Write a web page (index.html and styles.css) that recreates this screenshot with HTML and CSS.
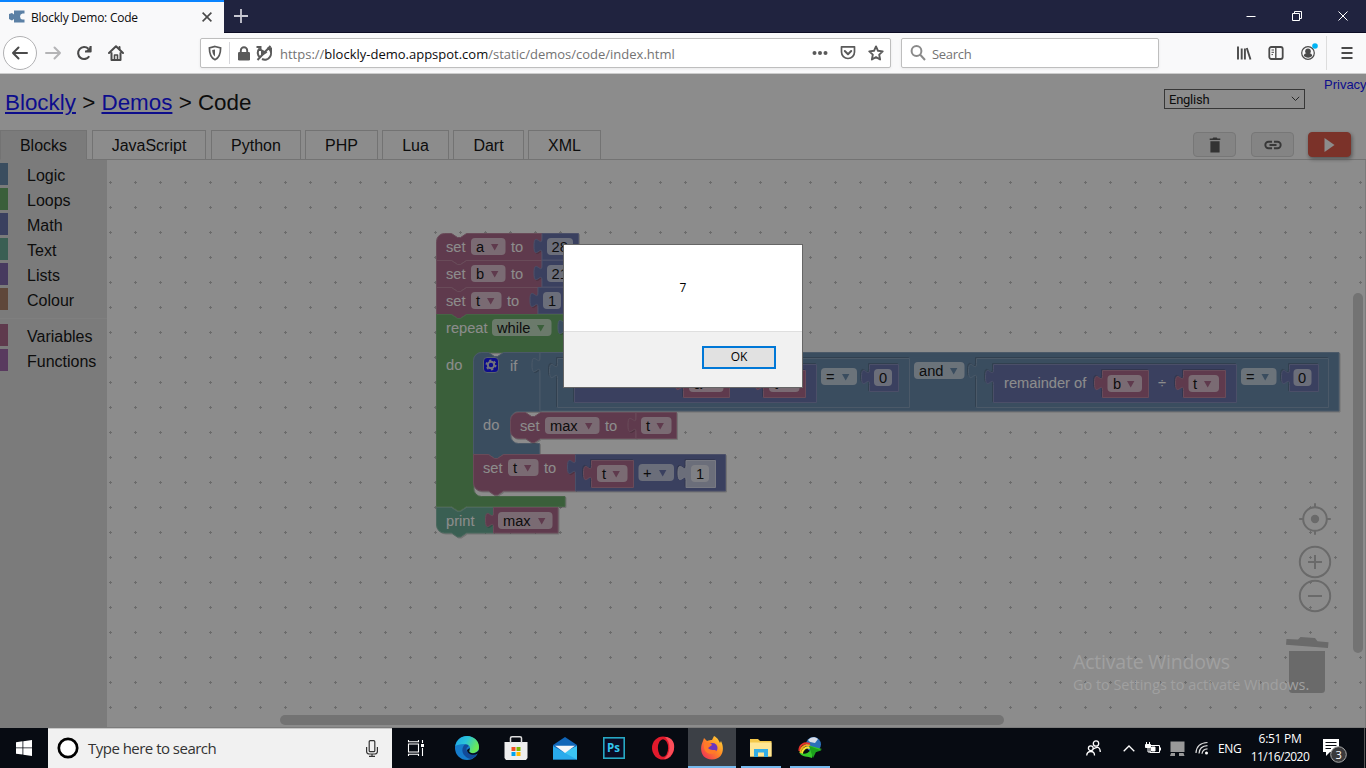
FILE: index.html
```html
<!DOCTYPE html>
<html lang="en">
<head>
<meta charset="utf-8">
<title>Blockly Demo: Code</title>
<link rel="stylesheet" href="styles.css">
</head>
<body>
<div class="screen">
  <header class="titlebar">
    <div class="tab-current">
      <svg class="favicon" width="16" height="16" viewBox="0 0 16 16"><path d="M5 1.500H15.500V4.500H13.500Q11 5 11 7.500T13.500 10.500H15.500V13.500H5V10L3 11.500L0 10V5L3 4L5 5.500Z" fill="#5b80a5"/></svg>
      <span class="tab-title">Blockly Demo: Code</span>
      <svg width="10" height="10" viewBox="0 0 10 10" stroke="#4a4a4a" stroke-width="1.6"><path d="M.6.6 9.4 9.4M9.4.6.6 9.4"/></svg>
    </div>
    <svg class="new-tab" width="14" height="14" viewBox="0 0 14 14" stroke="#c8c8d2" stroke-width="1.8"><path d="M7 0V14M0 7H14"/></svg>
    <div class="window-buttons">
      <svg width="10" height="10" viewBox="0 0 10 10" stroke="#fff"><path d="M.5 5.500H9.500"/></svg>
      <svg width="10" height="10" viewBox="0 0 10 10" stroke="#fff" fill="none"><path d="M.5 2.500H7.500V9.500H.5ZM2.500 2.500V.5H9.500V7.500H7.500"/></svg>
      <svg width="10" height="10" viewBox="0 0 10 10" stroke="#fff"><path d="M.5.5 9.500 9.500M9.500.5.5 9.500"/></svg>
    </div>
  </header>

  <nav class="navbar">
    <div class="nav-left">
      <span class="back"><svg width="18" height="16" viewBox="0 0 18 16" fill="none" stroke="#4a4a4a" stroke-width="2" stroke-linecap="round" stroke-linejoin="round"><path d="M16 8H2M7.500 2.500 2 8l5.500 5.500"/></svg></span>
      <svg width="18" height="16" viewBox="0 0 18 16" fill="none" stroke="#b4b4b6" stroke-width="2" stroke-linecap="round" stroke-linejoin="round"><path d="M2 8H16M10.500 2.500 16 8l-5.500 5.500"/></svg>
      <svg width="16" height="16" viewBox="0 0 16 16" fill="none" stroke="#4a4a4a" stroke-width="2.100"><path d="M13.200 11.200A6 6 0 1 1 12.400 3.800"/><path d="M14.600 1V6.500H9" stroke-linejoin="round"/><path d="M14 2V6H10Z" fill="#4a4a4a" stroke="none"/></svg>
      <svg width="16" height="16" viewBox="0 0 16 16" fill="none" stroke="#4a4a4a" stroke-width="2" stroke-linejoin="round" stroke-linecap="round"><path d="M1 8 8 1.300 15 8M3.500 8V15H12.500V8"/><path d="M6.500 14.500V10H9.500V14.500" stroke-width="1.600"/><path d="M11.500 2V4"/></svg>
    </div>
    <div class="urlbar">
      <svg width="14" height="16" viewBox="0 0 14 16" fill="none" stroke="#5a5a5a" stroke-width="1.700"><path d="M7 1.500 12.600 3C12.600 9 11 13 7 14.700C3 13 1.400 9 1.400 3Z"/><path d="M7 4.500V11.500C5 10 4.300 8 4.200 5Z" fill="#5a5a5a" stroke="none"/></svg>
      <i class="url-divider"></i>
      <svg class="lock" width="12" height="15" viewBox="0 0 12 15"><rect y="6" width="12" height="8.500" rx="1.300" fill="#5a5a5a"/><path d="M2.800 7V4.500a3.200 3.200 0 0 1 6.400 0V7" fill="none" stroke="#5a5a5a" stroke-width="1.900"/></svg>
      <svg class="autoplay" width="16" height="16" viewBox="0 0 16 16" fill="none" stroke="#5a5a5a" stroke-width="2"><path d="M4 12.600A6.200 6.200 0 0 1 3.500 3.500M12.500 3.500a6.200 6.200 0 0 1-6.500 10.500M.5 2H4.500V6M15 7.500V3.500H11M14.500 1 1.500 15"/><path d="M5 4 11.500 7.500 5 11.500Z" fill="#5a5a5a" stroke="none"/></svg>
      <span class="url">https://<b>blockly-demo.appspot.com</b>/static/demos/code/index.html</span>
      <svg width="16" height="4" viewBox="0 0 16 4" fill="#5a5a5a"><circle cx="2.500" cy="2" r="2"/><circle cx="8" cy="2" r="2"/><circle cx="13.500" cy="2" r="2"/></svg>
      <svg class="pocket" width="16" height="16" viewBox="0 0 16 16" fill="none" stroke="#5a5a5a" stroke-width="1.700" stroke-linejoin="round" stroke-linecap="round"><path d="M1.500 1.800H14.500V7a6.500 6.500 0 0 1-13 0Z"/><path d="M4.800 6 8 9.200 11.200 6" stroke-width="2"/></svg>
      <svg width="16" height="16" viewBox="0 0 16 16" fill="none" stroke="#5a5a5a" stroke-width="1.900" stroke-linejoin="round"><path d="m8 1.400 2 4.400 4.700.6-3.500 3.200.9 4.900L8 12.100l-4.100 2.400.9-4.900L1.300 6.400 6 5.800Z"/></svg>
    </div>
    <div class="search">
      <svg width="16" height="16" viewBox="0 0 16 16" fill="none" stroke="#8a8a8a" stroke-width="2"><circle cx="6.500" cy="6" r="4.900"/><path d="m10 9.500 5 5.500"/></svg>
      <span>Search</span>
    </div>
    <div class="nav-right">
      <svg width="16" height="16" viewBox="0 0 16 16" stroke="#4a4a4a" stroke-width="1.900"><path d="M2 1.500V14.500M5.700 3.500V14.500M8.900 3.500V14.500M10.800 3 14.500 14.500"/></svg>
      <svg width="16" height="16" viewBox="0 0 16 16" fill="none" stroke="#4a4a4a" stroke-width="1.800"><rect x="1.300" y="2" width="13.400" height="12" rx="2"/><path d="M7.800 2V14" stroke-width="1.400"/><path d="M3.500 5H6M3.500 7.300H6M3.500 9.600H5" stroke-width="1"/></svg>
      <svg class="account" width="18" height="18" viewBox="0 0 18 18"><circle cx="8" cy="10" r="6.300" fill="none" stroke="#4a4a4a" stroke-width="1.200"/><circle cx="8" cy="8.300" r="2.800" fill="#4a4a4a"/><path d="M3.800 13a4.200 3 0 0 1 8.400 0q-4 3.500-8.400 0Z" fill="#4a4a4a"/><circle cx="15" cy="3" r="2.800" fill="#00b3f4"/></svg>
      <i class="nav-divider"></i>
      <svg width="12" height="14" viewBox="0 0 12 14" stroke="#4a4a4a" stroke-width="2"><path d="M.5 2H11.500M.5 7H11.500M.5 12H11.500"/></svg>
    </div>
  </nav>

  <main class="page">
    <div class="page-head">
      <h1><a>Blockly</a> &gt; <a>Demos</a> &gt; Code</h1>
      <div class="language">English <svg width="9" height="6" viewBox="0 0 9 6" fill="none" stroke="#333"><path d="m.8.8 3.700 3.700L8.200.8"/></svg></div>
      <a class="privacy">Privacy</a>
    </div>
    <div class="tab-row">
      <span class="tab on">Blocks</span><span class="tab js">JavaScript</span><span class="tab py">Python</span><span class="tab php">PHP</span><span class="tab lua">Lua</span><span class="tab dart">Dart</span><span class="tab xml">XML</span>
      <div class="actions">
        <span class="action"><svg width="12" height="16" viewBox="0 0 12 16" fill="#4d4d4d"><path d="M.7 1.500H3.500L4.300.5H7.700L8.500 1.500H11.300V3H.7ZM1.400 4.200H10.600V15.500H1.400Z"/></svg></span>
        <span class="action"><svg width="18" height="10" viewBox="0 0 18 10" fill="none" stroke="#555" stroke-width="1.900"><path d="M8 1.800H4.500a3.200 3.200 0 0 0 0 6.400H8M10 1.800H13.500a3.200 3.200 0 0 1 0 6.400H10M5.500 5H12.500"/></svg></span>
        <span class="action run"><svg width="11" height="14" viewBox="0 0 11 14" fill="#fff"><path d="M.5 0 10.500 7 .5 14Z"/></svg></span>
      </div>
    </div>
    <div class="editor">
      <ul class="toolbox">
        <li class="logic">Logic</li><li class="loops">Loops</li><li class="math">Math</li><li class="text">Text</li><li class="lists">Lists</li><li class="colour">Colour</li>
        <li class="separator"></li>
        <li class="variables">Variables</li><li class="functions">Functions</li>
      </ul>
      <svg class="workspace" width="1259" height="568" viewBox="107 160 1259 568">
        <defs>
          <pattern id="grid" x="98" y="170" width="25" height="25" patternUnits="userSpaceOnUse"><path d="M11 12.500H14M12.500 11V14" stroke="#bcbcbc"/></pattern>
          <path id="down" d="M0 0H7.400L3.700 6.400Z"/>
        </defs>
        <rect x="107" y="160" width="1259" height="568" fill="url(#grid)"/>

        <!-- three assignments -->
        <g class="b variables">
          <path d="M436.500 241.500a8 8 0 0 1 8-8H451.500l6 4h3l6-4H542V260.500H466.500l-6 4h-3l-6-4H436.500Z"/>
          <path d="M436.500 260.500H451.500l6 4h3l6-4H542V287.500H466.500l-6 4h-3l-6-4H436.500Z"/>
          <path d="M436.500 287.500H451.500l6 4h3l6-4H538V314.500H466.500l-6 4h-3l-6-4H436.500Z"/>
        </g>
        <g class="b math">
          <path d="M542 233.500H578.500V260H542V253.500c0-10-8 8-8-7.500s8 2.500 8-7.500Z"/>
          <path d="M542 260.500H578.500V287H542V280.500c0-10-8 8-8-7.500s8 2.500 8-7.500Z"/>
          <path d="M538 287.500H566V314H538V307.500c0-10-8 8-8-7.500s8 2.500 8-7.500Z"/>
        </g>
        <!-- repeat loop -->
        <g class="b loops"><path d="M436.500 314.500H451.500l6 4h3l6-4H700V352.500H481.500a8 8 0 0 0-8 8V488.500a8 8 0 0 0 8 8H565V506.500H466.500l-6 4h-3l-6-4H436.500Z"/></g>
        <g class="b logic">
          <path d="M566 314.500H700V350H566V334.500c0-10-8 8-8-7.500s8 2.500 8-7.500Z"/>
          <path d="M473.500 360.500a8 8 0 0 1 8-8H488.500l6 4h3l6-4H540V411.500H518.500a8 8 0 0 0-8 8V435.500a8 8 0 0 0 8 8H539.500V454.500H503.500l-6 4h-3l-6-4H473.500Z"/>
          <path d="M540 352.500H1339V411H540V372.500c0-10-8 8-8-7.500s8 2.500 8-7.500Z"/>
          <path class="inset" d="M557.500 358.500H909.500V407.500H557.500V378.500c0-10-8 8-8-7.500s8 2.500 8-7.500Z"/>
          <path class="inset" d="M976.500 358.500H1328.500V407.500H976.500V378.500c0-10-8 8-8-7.500s8 2.500 8-7.500Z"/>
        </g>
        <g class="b math">
          <path class="inset" d="M574.500 364.500H816.500V402.500H574.500V384.500c0-10-8 8-8-7.500s8 2.500 8-7.500Z"/>
          <path class="inset" d="M869.500 364.500H898.500V391.500H869.500V384.500c0-10-8 8-8-7.500s8 2.500 8-7.500Z"/>
          <path class="inset" d="M993.500 364.500H1236.500V402.500H993.500V384.500c0-10-8 8-8-7.500s8 2.500 8-7.500Z"/>
          <path class="inset" d="M1289.500 364.500H1318.500V391.500H1289.500V384.500c0-10-8 8-8-7.500s8 2.500 8-7.500Z"/>
        </g>
        <g class="b variables">
          <path class="inset" d="M683.500 370.500H729.500V397.500H683.500V390.500c0-10-8 8-8-7.500s8 2.500 8-7.500Z"/>
          <path class="inset" d="M763.500 370.500H805.500V397.500H763.500V390.500c0-10-8 8-8-7.500s8 2.500 8-7.500Z"/>
          <path class="inset" d="M1102.500 370.500H1148.500V397.500H1102.500V390.500c0-10-8 8-8-7.500s8 2.500 8-7.500Z"/>
          <path class="inset" d="M1183.500 370.500H1225.500V397.500H1183.500V390.500c0-10-8 8-8-7.500s8 2.500 8-7.500Z"/>
          <!-- set max to t -->
          <path d="M510.500 420.500a8 8 0 0 1 8-8H525.500l6 4h3l6-4H636V438.500H540.500l-6 4h-3l-6-4H518.500a8 8 0 0 1-8-8Z"/>
          <path d="M636 412.500H676.500V438.500H636V432.500c0-10-8 8-8-7.500s8 2.500 8-7.500Z"/>
          <!-- set t to t + 1 -->
          <path d="M473.500 454.500H488.500l6 4h3l6-4H575.500V491H503.500l-6 4h-3l-6-4H481.500a8 8 0 0 1-8-8Z"/>
        </g>
        <g class="b math"><path d="M575.500 454.500H725.500V491H575.500V474.500c0-10-8 8-8-7.500s8 2.500 8-7.500Z"/></g>
        <g class="b variables"><path class="inset" d="M591.500 460.500H633.500V487.500H591.500V480.500c0-10-8 8-8-7.500s8 2.500 8-7.500Z"/></g>
        <g class="b shadow"><path class="inset" d="M686 460.500H715.500V487.500H686V480.500c0-10-8 8-8-7.500s8 2.500 8-7.500Z"/></g>
        <!-- print -->
        <g class="b text"><path d="M436.500 507.500H451.500l6 4h3l6-4H493.500V533H466.500l-6 4h-3l-6-4H444.500a8 8 0 0 1-8-8Z"/></g>
        <g class="b variables"><path d="M493.500 507.500H558V533H493.500V527.500c0-10-8 8-8-7.500s8 2.500 8-7.500Z"/></g>

        <g class="fields">
          <rect x="471" y="238" width="34.500" height="17" rx="4"/><rect x="547" y="238" width="26" height="17" rx="4"/>
          <rect x="471" y="265" width="34.500" height="17" rx="4"/><rect x="547" y="265" width="26" height="17" rx="4"/>
          <rect x="471" y="292" width="30.500" height="17" rx="4"/><rect x="543" y="292" width="18" height="17" rx="4"/>
          <rect x="492" y="319" width="59.500" height="17" rx="4"/>
          <rect x="689" y="375" width="34.500" height="17" rx="4"/><rect x="769" y="375" width="30.500" height="17" rx="4"/>
          <rect x="821" y="368" width="36" height="17" rx="4"/><rect x="874" y="369" width="18" height="17" rx="4"/>
          <rect x="914" y="362" width="50.500" height="17" rx="4"/>
          <rect x="1107.500" y="375" width="34.500" height="17" rx="4"/><rect x="1188.500" y="375" width="30.500" height="17" rx="4"/>
          <rect x="1241" y="368" width="35.500" height="17" rx="4"/><rect x="1293.500" y="369" width="18" height="17" rx="4"/>
          <rect x="545" y="417" width="54.500" height="17" rx="4"/><rect x="641" y="417" width="30.500" height="17" rx="4"/>
          <rect x="508" y="459" width="30.500" height="17" rx="4"/><rect x="597" y="465" width="30.500" height="17" rx="4"/>
          <rect x="638.500" y="464" width="35.500" height="17" rx="4"/><rect x="691" y="465" width="18" height="17" rx="4"/>
          <rect x="498" y="512" width="54.500" height="17" rx="4"/>
        </g>
        <g class="labels">
          <text x="446" y="252">set</text><text x="511" y="252">to</text>
          <text x="446" y="279">set</text><text x="511" y="279">to</text>
          <text x="446" y="306">set</text><text x="507" y="306">to</text>
          <text x="446" y="333">repeat</text><text x="446" y="370">do</text>
          <text x="510" y="371">if</text><text x="483" y="430">do</text>
          <text x="520" y="431">set</text><text x="605" y="431">to</text>
          <text x="483" y="473">set</text><text x="544" y="473">to</text>
          <text x="446" y="526">print</text><text x="1004" y="388">remainder of</text><text x="1158" y="388">÷</text>
        </g>
        <g class="values">
          <text x="476" y="252">a</text><text x="551.500" y="252">28</text>
          <text x="476" y="279">b</text><text x="551.500" y="279">21</text>
          <text x="476" y="306">t</text><text x="548" y="306">1</text>
          <text x="497" y="333">while</text><text x="694" y="389">a</text><text x="774" y="389">t</text>
          <text x="826" y="382">=</text><text x="879" y="383">0</text><text x="919" y="376">and</text>
          <text x="1113" y="389">b</text><text x="1193" y="389">t</text><text x="1246" y="382">=</text><text x="1298" y="383">0</text>
          <text x="550" y="431">max</text><text x="646" y="431">t</text>
          <text x="513" y="473">t</text><text x="602" y="479">t</text><text x="643" y="478">+</text><text x="696" y="479">1</text>
          <text x="503" y="526">max</text>
        </g>
        <g fill="#a55b80">
          <use href="#down" x="491" y="244"/><use href="#down" x="491" y="271"/><use href="#down" x="487" y="298"/>
          <use href="#down" x="709" y="381"/><use href="#down" x="785" y="381"/><use href="#down" x="1127" y="381"/><use href="#down" x="1204" y="381"/>
          <use href="#down" x="585" y="423"/><use href="#down" x="656.500" y="423"/><use href="#down" x="524" y="465"/><use href="#down" x="612.500" y="471"/><use href="#down" x="538" y="518"/>
        </g>
        <g fill="#5b80a5"><use href="#down" x="842" y="374"/><use href="#down" x="950" y="368"/><use href="#down" x="1261.500" y="374"/></g>
        <use href="#down" x="537" y="325" fill="#5ba55b"/><use href="#down" x="659" y="470" fill="#5b67a5"/>
        <g transform="translate(483 357)"><rect x=".5" y=".5" width="15" height="15" rx="3.500" fill="#00f" stroke="#9ab"/><circle cx="8" cy="8" r="3.200" fill="none" stroke="#ccd" stroke-width="2"/><circle cx="8" cy="8" r="4.600" fill="none" stroke="#ccd" stroke-width="1.800" stroke-dasharray="2.200 2.617"/></g>

        <g class="zoom">
          <circle cx="1315" cy="519" r="11.800"/><circle class="solid" cx="1315" cy="519" r="4.200"/>
          <path d="M1315 503.200V507M1315 531V534.800M1299.200 519H1303M1327 519H1330.800"/>
          <circle cx="1315" cy="562" r="15.200"/><path d="M1308 562H1322M1315 555V569"/>
          <circle cx="1315" cy="596" r="15.200"/><path d="M1308 596H1322"/>
        </g>
        <path class="bin" d="M1289 651H1325V689.500a3.500 3.500 0 0 1-3.500 3.500H1292.500a3.500 3.500 0 0 1-3.500-3.500ZM1286.500 639 1298 639.600 1300.500 637 1315 638 1317.500 641.300 1328.500 642.200 1328 648 1286 644.800Z"/>
        <g class="scroll"><rect x="280" y="715" width="724" height="10" rx="5"/><rect x="1353" y="293" width="10" height="360" rx="5"/></g>
        <path d="M107 727.500H1366M1365.500 160V728" stroke="#ddd"/>
      </svg>
    </div>

    <div class="veil"></div>
    <div class="dialog">
      <p>7</p>
      <div class="dialog-foot"><span class="ok">OK</span></div>
    </div>
    <div class="watermark"><strong>Activate Windows</strong><span>Go to Settings to activate Windows.</span></div>
  </main>

  <footer class="taskbar">
    <div class="start"><svg width="16" height="16" viewBox="0 0 16 16" fill="#fff"><path d="M0 2.200 6.500 1.300V7.500H0ZM7.300 1.200 16 0V7.500H7.300ZM0 8.300H6.500V14.600L0 13.700ZM7.300 8.300H16V16L7.300 14.800Z"/></svg></div>
    <div class="task-search">
      <svg width="22" height="22" viewBox="0 0 22 22"><circle cx="11" cy="11" r="9.200" fill="#fff" stroke="#000" stroke-width="2.700"/></svg>
      <span>Type here to search</span>
      <svg class="mic" width="12" height="17" viewBox="0 0 12 17" fill="none" stroke="#333" stroke-width="1.200"><rect x="3.200" y=".7" width="5.600" height="11" rx="1"/><path d="M.6 7V11.500Q.6 14 3.500 14H8.500Q11.400 14 11.400 11.500V7M6 14V16M3 16.300H9"/></svg>
    </div>
    <div class="apps">
      <span class="app"><svg width="18" height="16" viewBox="0 0 18 16" fill="none" stroke="#fff" stroke-width="1.100"><path d="M1.500 4H11.500V12H1.500ZM1.500 0V1.800H11.500V0M1.500 16V14.200H11.500V16M15.500 0V3M15.500 8V16"/><path d="M14 4H17V7H14Z" fill="#fff" stroke="none"/></svg></span>
      <span class="app"><svg width="24" height="24" viewBox="0 0 24 24"><defs><linearGradient id="edge" x1="0" y1="0" x2="1" y2=".4"><stop stop-color="#1ca4e8"/><stop offset=".5" stop-color="#2bc4d8"/><stop offset="1" stop-color="#6bea55"/></linearGradient></defs><circle cx="12" cy="12" r="12" fill="#167ccb"/><path d="M.3 10C1.500 4 6 0 12 0c7 0 12 5 12 11 0 4-3 6-7 6-3 0-4-1-2.500-3 2-3-1-6-5-6-5 0-7.500 1-9.200 2Z" fill="url(#edge)"/><path d="M8.500 10C5 16 10 22 16 23c3-1 5-3 6.500-6-4 3-11 1-11-4 0-2 2-2 2-3s-3-3-5 0Z" fill="#124b99"/><path d="M14.500 12c1 2-2 4 2 5 3 .7 6-.7 7.300-3l.2 3-2 1c-4 2-10 0-10-4Z" fill="#080d14"/></svg></span>
      <span class="app"><svg width="24" height="24" viewBox="0 0 24 24"><path d="M.5 6H23.500V22L22 24H2L.5 22Z" fill="#eee"/><path d="M6.500 7V2Q6.500.8 8 .8H16Q17.500.8 17.500 2V7" fill="none" stroke="#ddd" stroke-width="1.500"/><path fill="#f25022" d="M7.500 11H11.500V15H7.500Z"/><path fill="#7fba00" d="M12.500 11H16.500V15H12.500Z"/><path fill="#00a4ef" d="M7.500 16H11.500V20H7.500Z"/><path fill="#ffb900" d="M12.500 16H16.500V20H12.500Z"/></svg></span>
      <span class="app"><svg width="24" height="23" viewBox="0 0 24 23"><path d="M0 8 12 0 24 8V22.500H0Z" fill="#1066b8"/><path d="M0 9V22.500H24V9L12 16Z" fill="#29abec"/><path d="M24 9V22.500L11 15.500Z" fill="#3bc5f3"/><path d="M2 8.700H22L12 16Z" fill="#f4f6f8"/></svg></span>
      <span class="app"><svg width="22" height="22" viewBox="0 0 22 22"><rect x=".8" y=".8" width="20.400" height="20.400" fill="#0b0b24" stroke="#27a8c4" stroke-width="1.600"/><text x="4" y="15.200" class="ps">Ps</text></svg></span>
      <span class="app"><svg width="24" height="24" viewBox="0 0 24 24"><ellipse cx="12" cy="12" rx="11" ry="11.500" fill="#e21a2c"/><path d="M14 1C22 1 24 8 23 13S18 23 13 23C20 18 20 6 14 1Z" fill="#fb4e59"/><ellipse cx="12" cy="12" rx="5.100" ry="8.700" fill="#080c12"/></svg></span>
      <span class="app active"><svg width="24" height="24" viewBox="0 0 24 24"><defs><linearGradient id="fox" x1="1" y1="0" x2="0" y2="1"><stop stop-color="#ffe23d"/><stop offset=".45" stop-color="#ff8a24"/><stop offset="1" stop-color="#ed225e"/></linearGradient></defs><path d="M3 5 4 2 7 5C9 4 11 4 12 4L14 0C18 2 19 5 20 7L21 5C25 13 23 23 12 23.500 1 23-1 13 3 5Z" fill="url(#fox)"/><circle cx="12.500" cy="12" r="5" fill="#6c35bd"/><path d="M4 7C8 6 11 7 12 9L8 12C11 15 14 13 17 15 13 20 5 18 4 12Z" fill="#ff7a28"/></svg></span>
      <span class="app open"><svg width="22" height="20" viewBox="0 0 22 20"><path d="M0 1H8L10 3H21.500V18.500H0Z" fill="#f4c84a"/><path d="M0 4.500H21.500V18.500H0Z" fill="#ffe694"/><path d="M4 19V11H18V19H14V14.500H8V19Z" fill="#34aee5"/></svg></span>
      <span class="app open"><svg width="24" height="24" viewBox="0 0 24 24"><circle cx="15.500" cy="8.500" r="7.500" fill="#2b70b8"/><path d="M10 4C12 1 17 0 20 3L17 7 12 6Z" fill="#d8dde8"/><g fill="none" stroke-width="2"><path d="M1.500 15C1 9 6 6 12 8" stroke="#e5332a"/><path d="M2.500 17C2.500 11 7 8 12 10" stroke="#f5a623"/><path d="M4 18.500C4 13 8 10.500 12 12" stroke="#f6e631"/></g><path d="M1 16C4 22 10 20 14 22L15 17 24 13 11 9.500 13 13.500C10 18 5 19 1 16Z" fill="#35c928"/><path d="M11 10 23.500 14.500 18 16 15 22Z" fill="#1ca31c"/></svg></span>
    </div>
    <div class="tray">
      <svg class="people" width="15" height="16" viewBox="0 0 15 16" fill="none" stroke="#fff" stroke-width="1.300"><circle cx="10" cy="3.500" r="2.700"/><path d="M7 9Q14 4.500 14.300 12"/><circle cx="4.800" cy="8.200" r="2.400"/><path d="M.7 15.500Q1 11.500 4.800 11.500T8.500 15.500"/></svg>
      <svg class="chev" width="12" height="7" viewBox="0 0 12 7" fill="none" stroke="#fff" stroke-width="1.300"><path d="M.7 6.300 6 1l5.300 5.300"/></svg>
      <svg class="battery" width="16" height="12" viewBox="0 0 16 12" fill="none" stroke="#fff"><path d="M5 3.500H14.500V10.500H5ZM15.500 5.500V8.500M1.500 0V2.500M4.500 0V2.500"/><path d="M.5 2.500H5.500V5.500H.5ZM6.500 5H10V9H6.500Z" fill="#fff"/><path d="M3 6V10H6"/></svg>
      <svg class="net" width="15" height="15" viewBox="0 0 15 15" fill="#999"><path d="M.5.500H14.500V11H.5ZM1 12H5V15H0ZM9 12H13.500L14.500 15H9Z"/></svg>
      <svg class="wifi" width="14" height="14" viewBox="0 0 14 14" fill="none" stroke="#ddd" stroke-width="1.200"><path d="M1 12Q1.500 2 12.500 1.500M4 12.500Q4.500 5 12.500 4.700M7 12.700Q7.500 8 12.500 7.800"/><circle cx="11.500" cy="12" r="1.500" fill="#fff" stroke="none"/></svg>
      <span class="lang">ENG</span>
      <span class="clock"><span>6:51 PM</span><span class="date">11/16/2020</span></span>
      <svg class="notice" width="26" height="26" viewBox="0 0 26 26"><path d="M1 1H17V14H8L4 18V14H1Z" fill="#fff"/><path d="M3.500 4.500H14.500M3.500 7.500H14.500M3.500 10.500H9" stroke="#0a0d13" stroke-width="1.200"/><circle cx="16.500" cy="16.500" r="7.800" fill="#3a3a3c" stroke="#aaa"/><text x="13.500" y="20.500">3</text></svg>
    </div>
  </footer>
</div>
</body>
</html>
```
FILE: styles.css
```css
* { box-sizing: border-box; }
body { margin: 0; }
svg { display: block; flex: none; }
.screen { width: 1366px; height: 768px; display: flex; flex-direction: column; overflow: hidden; font-family: "Open Sans", "Noto Sans", sans-serif; }

.titlebar { height: 33px; flex: none; display: flex; align-items: center; background: #20233f; border-bottom: 1px solid #0c0c24; }
.tab-current { width: 224px; height: 33px; margin-bottom: -1px; padding: 0 12px 1px 9px; border-top: 2px solid #0a84ff; background: #f9f9fa; display: flex; align-items: center; }
.tab-title { flex: 1; margin-left: 6px; font-size: 12px; letter-spacing: -.24px; color: #0c0c0d; white-space: nowrap; }
.new-tab { margin-left: 10px; }
.window-buttons { margin-left: auto; display: flex; gap: 36px; padding-right: 18px; }

.navbar { height: 41px; flex: none; display: flex; align-items: center; background: #f9f9fa; border-bottom: 1px solid #ccc; }
.nav-left { width: 200px; padding-left: 3px; display: flex; align-items: center; gap: 15px; }
.nav-left > svg:nth-child(2) { margin: 0 -1px 0 -9px; }
.nav-left > svg:last-child { margin-left: 1px; }
.back { width: 34px; height: 34px; margin-right: 1px; border: 1px solid #b1b1b3; border-radius: 50%; background: #fff; display: flex; align-items: center; justify-content: center; }
.urlbar, .search { height: 30px; border: 1px solid #bebebe; border-radius: 2px; background: #fff; display: flex; align-items: center; font-size: 13px; box-shadow: 0 1px 3px #0001; }
.urlbar { width: 691px; padding: 0 6px 0 7px; }
.url-divider { width: 1px; height: 22px; margin: 0 8px 0 7px; background: #d7d7db; }
.autoplay { margin: 0 8px 0 6px; }
.url { flex: 1; color: #737373; letter-spacing: 0; white-space: nowrap; padding-top: 2px; }
.url b { color: #0c0c0d; font-weight: 400; }
.pocket { margin: 0 12px; }
.search { width: 258px; margin-left: 10px; padding-left: 8px; gap: 6px; color: #737373; }
.search span { padding-top: 2px; letter-spacing: -.3px; }
.nav-right { margin-left: auto; padding-right: 13px; display: flex; align-items: center; gap: 16px; }
.account { margin: -3px 0 0; }
.nav-divider { width: 1px; height: 34px; margin: 0 -2px 0 -8px; background: #ddd; }

.page { position: relative; height: 654px; flex: none; display: flex; flex-direction: column; background: #fff; font-family: "Liberation Sans", Arial, sans-serif; color: #000; }
.page-head { height: 56px; display: flex; align-items: flex-start; }
.page a { color: #00f; }
h1 { margin: 15px auto 0 5px; font-size: 22.4px; line-height: 27px; font-weight: 400; }
h1 a { text-decoration: underline; }
.language { width: 141px; height: 20px; margin-top: 15px; padding: 0 4px; border: 1px solid #555; display: flex; align-items: center; justify-content: space-between; font: 13px Roboto, sans-serif; letter-spacing: -.25px; }
.privacy { margin: 3px 0 0 19px; width: 42px; font: 13px/16px "Liberation Sans", sans-serif; white-space: nowrap; }
.tab-row { height: 30px; flex: none; display: flex; align-items: flex-start; border-bottom: 1px solid #ccc; font-size: 16px; }
.tab { height: 30px; margin-right: 5px; padding-top: 5px; border: 1px solid #ccc; text-align: center; line-height: 19px; }
.tab.on { width: 87px; background: #ddd; border-bottom-color: #ddd; }
.js { width: 114px; }
.py { width: 90px; margin-right: 4px; }
.php { width: 73px; margin-right: 4px; }
.lua { width: 67px; margin-right: 4px; }
.dart { width: 71px; margin-right: 4px; }
.xml { width: 73px; }
.actions { margin: 2px 15px 0 auto; display: flex; gap: 14px; }
.action { width: 43px; height: 25px; margin-left: 1px; border: 1px solid #d4d4d4; border-radius: 4px; background: #eee; display: flex; align-items: center; justify-content: center; }
.run { margin-left: 0; background: #dd4b39; border-color: #dd4b39; box-shadow: 1px 2px 4px #888; }
.editor { flex: 1; min-height: 0; display: flex; }
.toolbox { width: 107px; flex: none; margin: 0; padding: 3px 0 0; list-style: none; background: #ddd; font-size: 16px; }
.toolbox li { height: 22px; margin-bottom: 3px; padding-left: 19px; border-left: 8px solid; line-height: 25px; }
.toolbox .separator { height: 1px; margin: 8px 0 5px; padding: 0; border: 0; background: #e5e5e5; }
.toolbox li { color: #000; }
li.logic { border-color: #5b80a5; }
li.loops { border-color: #5ba55b; }
li.math { border-color: #5b67a5; }
li.text { border-color: #5ba58c; }
li.lists { border-color: #745ba5; }
li.colour { border-color: #a5745b; }
li.variables { border-color: #a55b80; }
li.functions { border-color: #995ba5; }

.b path { stroke-width: 1; }
.b.variables { fill: #a55b80; stroke: #b87c99; }
.b.math { fill: #5b67a5; stroke: #7c85b7; }
.b.logic { fill: #5b80a5; stroke: #7c99b7; }
.b.loops { fill: #5ba55b; stroke: #70b070; }
.b.text { fill: #5ba58c; stroke: #7cb7a3; }
.b.shadow { fill: #bdc2db; stroke: #d5d9ea; }
.b path { filter: drop-shadow(1px 1px 0 #0003); }
.b .inset { filter: drop-shadow(-1px -1px 0 #0003); }
.fields { fill: #fff; fill-opacity: .6; }
.labels, .values { font: 14.67px "Liberation Sans", Arial, sans-serif; }
.labels { fill: #fff; }
.zoom { fill: none; stroke: #bababa; stroke-width: 2; }
.zoom .solid { fill: #bababa; stroke: none; }
.bin { fill: #bababa; }
.scroll { fill: #ccc; }

.veil { position: absolute; inset: 0; background: rgba(26, 26, 26, .5); }
.dialog { position: absolute; left: 563px; top: 170px; width: 240px; height: 144px; border: 1px solid #666; background: #fff; display: flex; flex-direction: column; font: 12px "Open Sans", sans-serif; }
.dialog p { flex: 1; margin: 0; padding-top: 34px; text-align: center; }
.dialog-foot { height: 56px; padding: 14px 26px 0 0; border-top: 1px solid #dfdfdf; background: #f1f1f1; display: flex; justify-content: flex-end; }
.ok { width: 74px; height: 23px; border: 2px solid #0078d7; background: #e1e1e1; text-align: center; line-height: 18px; }
.watermark { position: absolute; left: 1073px; top: 575px; display: flex; flex-direction: column; color: #a0a0a0; font-family: "Open Sans", sans-serif; white-space: nowrap; }
.watermark strong { font-size: 19.500px; font-weight: 400; line-height: 25px; letter-spacing: -.2px; }
.watermark span { font-size: 14.500px; line-height: 21px; letter-spacing: -.04px; }

.taskbar { height: 40px; flex: none; display: flex; background: #070b12; color: #fff; }
.start { width: 48px; display: flex; align-items: center; justify-content: center; }
.task-search { width: 344px; padding: 0 14px 1px 9px; display: flex; align-items: center; background: #f1f1f1; border-top: 1px solid #c8c8c8; color: #333; font-size: 15px; }
.task-search span { flex: 1; margin-left: 9px; letter-spacing: -.52px; }
.apps { display: flex; }
.app { width: 49px; display: flex; align-items: center; justify-content: center; }
.app:first-child { width: 50px; padding-right: 2px; }
.active { width: 48px; margin-left: 1px; background: #3c4046; border-bottom: 2px solid #76b9ed; padding-top: 2px; }
.open { width: 40px; margin-left: 5px; border-bottom: 2px solid #76b9ed; padding-top: 2px; }
.open + .open { margin-left: 9px; }
.ps { font: 700 11.500px "Open Sans", sans-serif; fill: #31c5f0; }
.tray { margin-left: auto; width: 280px; display: flex; align-items: center; font-size: 12px; border-right: 1px solid #555; margin-right: 1px; }
.people { margin-left: 1px; }
.chev { margin-left: 22px; }
.battery { margin-left: 10px; }
.net { margin-left: 9px; }
.wifi { margin-left: 10px; }
.lang { width: 24px; margin-left: 9px; letter-spacing: -.3px; }
.clock { width: 60px; margin-left: 8px; display: flex; flex-direction: column; text-align: center; line-height: 18px; letter-spacing: -.3px; white-space: nowrap; }
.date { letter-spacing: -.5px; }
.notice { margin: 5px 0 0 12px; font: 11px "Open Sans", sans-serif; fill: #fff; }
```
